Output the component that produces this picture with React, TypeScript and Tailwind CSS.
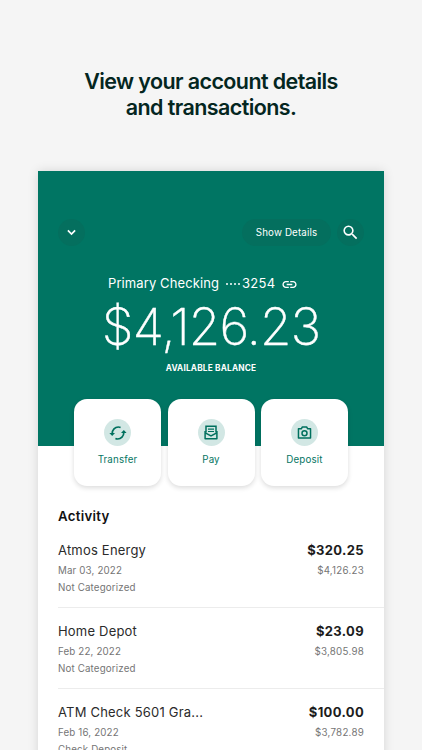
import React from "react";
import { MdLink, MdSearch } from "react-icons/md";

type TransactionTypes = {
  name: string;
  date: string;
  category: string;
  amount: string;
  balance: string;
};

const transactions: TransactionTypes[] = [
  {
    name: "Atmos Energy",
    date: "Mar 03, 2022",
    category: "Not Categorized",
    amount: "$320.25",
    balance: "$4,126.23",
  },
  {
    name: "Home Depot",
    date: "Feb 22, 2022",
    category: "Not Categorized",
    amount: "$23.09",
    balance: "$3,805.98",
  },
  {
    name: "ATM Check 5601 Gra...",
    date: "Feb 16, 2022",
    category: "Check Deposit",
    amount: "$100.00",
    balance: "$3,782.89",
  },
];

const TransferIcon = () => (
  <svg width="18" height="18" viewBox="0 0 18 18" fill="none" stroke="#00705e" strokeWidth="1.7">
    <path d="M3.2 9.6C3.2 5.6 6 3 9.3 3c.8 0 1.6.2 2.3.5" />
    <path d="M14.8 8.4c0 4-2.8 6.6-6.1 6.6-.8 0-1.6-.2-2.3-.5" />
    <path d="M.4 9h5.6l-2.8 3.1z" fill="#00705e" stroke="none" />
    <path d="M17.6 9H12l2.8-3.1z" fill="#00705e" stroke="none" />
  </svg>
);

const PayIcon = () => (
  <svg width="14" height="15" viewBox="0 0 14 15" fill="none" stroke="#00705e" strokeWidth="1.5">
    <path d="M2 7.5V1.2h10v6.3" />
    <path d="M1.1 6v7.8h11.8V6" strokeLinejoin="round" />
    <path d="M1.2 7.8L7 11l5.8-3.2" />
    <path d="M4 4.1h6M4 6.5h6" strokeWidth="1.2" />
  </svg>
);

const DepositIcon = () => (
  <svg width="15" height="13" viewBox="0 0 16 14" fill="none" stroke="#00705e" strokeWidth="1.6">
    <path d="M1.5 3h3l1.2-1.9h4.6L11.5 3h3v9.8h-13z" strokeLinejoin="round" />
    <circle cx="8" cy="7.8" r="2.7" />
  </svg>
);

const actions = [
  { label: "Transfer", icon: <TransferIcon /> },
  { label: "Pay", icon: <PayIcon /> },
  { label: "Deposit", icon: <DepositIcon /> },
];

export default function App() {
  return (
    <div className="w-full h-[750px] overflow-hidden bg-[#f5f5f5] pt-[68px] font-['Inter',sans-serif]">
      <h1 className="text-center text-[21.5px] leading-[26px] font-semibold tracking-[-0.6px] text-[#04261f]">
        View your account details
        <br />
        and transactions.
      </h1>

      <div className="mx-[38px] mt-[51px] h-[620px] bg-white shadow-[0_0_10px_rgba(0,0,0,0.13)]">
        <div className="h-[275px] bg-[#007563] pt-12 text-white">
          <div className="flex items-center px-5">
            <button className="flex size-[27px] items-center justify-center rounded-full bg-[#046f5e]">
              <svg width="9" height="7" viewBox="0 0 10 7" fill="none" stroke="white" strokeWidth="1.9">
                <path d="M1 1.2l4 4 4-4" />
              </svg>
            </button>
            <button className="ml-auto h-[27px] w-[89px] rounded-full bg-[#046f5e] pt-[2px] text-[9.75px] tracking-[0.15px]">
              Show Details
            </button>
            <button className="ml-[6px] flex size-[27px] items-center justify-center rounded-full bg-[#046f5e]">
              <MdSearch size={19} />
            </button>
          </div>

          <div className="mt-[28px] flex h-5 items-center pl-[70px] text-[13px] tracking-[0.1px]">
            <span>Primary Checking</span>
            <span className="ml-[7px] flex gap-[2px]">
              <i className="size-[2px] rounded-full bg-white" />
              <i className="size-[2px] rounded-full bg-white" />
              <i className="size-[2px] rounded-full bg-white" />
              <i className="size-[2px] rounded-full bg-white" />
            </span>
            <span className="ml-[2px] tracking-[0.3px]">3254</span>
            <MdLink size={17} className="ml-[5px]" />
          </div>
          <div className="mt-[6px] text-center text-[51px] leading-[54px] font-extralight tracking-[-0.8px] [-webkit-text-stroke:0.4px_white]">
            $4,126.23
          </div>
          <div className="mt-[8px] text-center text-[8.25px] leading-3 font-bold tracking-[0.2px]">
            AVAILABLE BALANCE
          </div>
        </div>

        <div className="relative -mt-[47px] flex justify-center gap-[6.5px]">
          {actions.map((action) => (
            <button
              key={action.label}
              className="flex h-[87px] w-[87px] flex-col items-center rounded-[13px] bg-white pt-5 shadow-[0_2px_5px_rgba(0,0,0,0.14)]"
            >
              <span className="flex size-[27px] items-center justify-center rounded-full bg-[#d2e7e4]">
                {action.icon}
              </span>
              <span className="mt-[6px] text-[9.75px] leading-4 tracking-[0.15px] text-[#067663]">
                {action.label}
              </span>
            </button>
          ))}
        </div>

        <div className="pt-5 pl-5">
          <h2 className="text-[13.25px] leading-5 font-semibold tracking-[0.3px] text-[#111]">
            Activity
          </h2>
          <div className="pt-px">
            {transactions.map((item) => (
              <div
                key={item.name}
                className="flex h-[81px] justify-between border-b border-[#ececec] pt-[13px] pr-5 text-[9.75px] leading-[17px] tracking-[0.15px] text-[#757575]"
              >
                <div>
                  <div className="text-[13px] leading-5 tracking-[0.2px] text-[#2b2b2b]">
                    {item.name}
                  </div>
                  <div className="mt-[2px]">{item.date}</div>
                  <div>{item.category}</div>
                </div>
                <div className="text-right">
                  <div className="text-[13px] leading-5 font-bold tracking-[0.35px] text-[#1c1c1c]">
                    {item.amount}
                  </div>
                  <div className="mt-[2px] tracking-[0.25px]">{item.balance}</div>
                </div>
              </div>
            ))}
          </div>
        </div>
      </div>
    </div>
  );
}
